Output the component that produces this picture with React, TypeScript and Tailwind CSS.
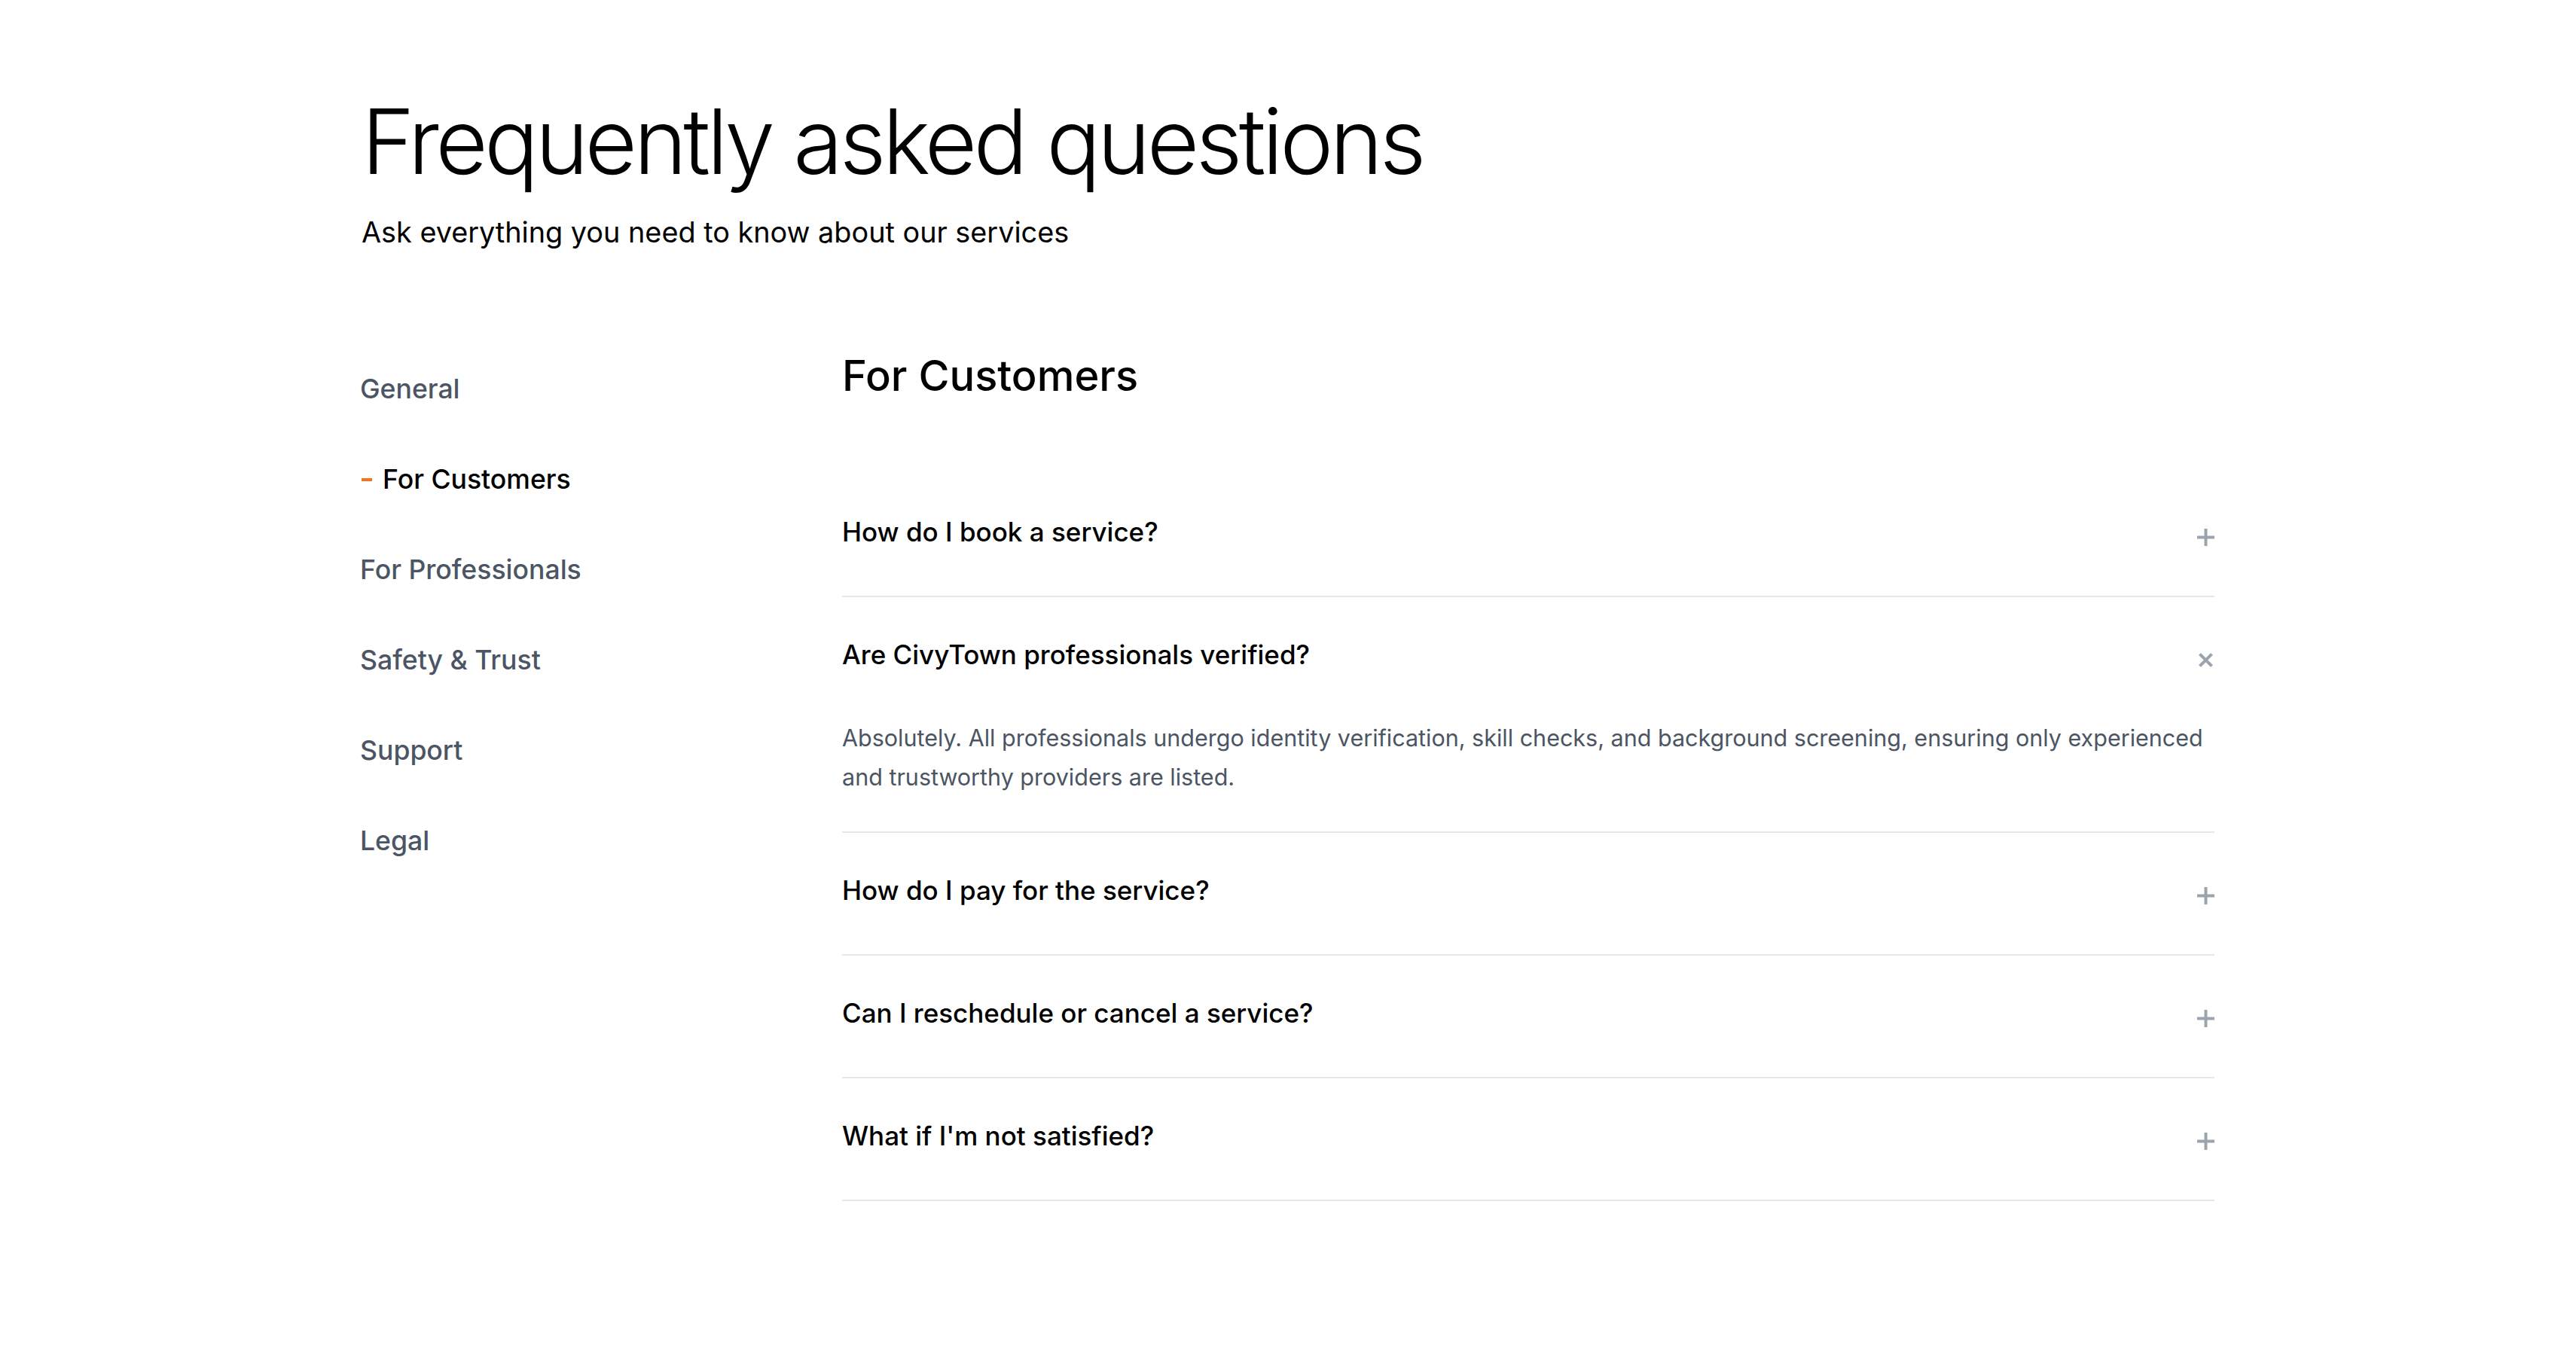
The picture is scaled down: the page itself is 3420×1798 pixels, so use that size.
import React from "react";

const nav = ["General", "For Customers", "For Professionals", "Safety & Trust", "Support", "Legal"];

const faqs = [
  { q: "How do I book a service?", a: "", open: false },
  {
    q: "Are CivyTown professionals verified?",
    a: "Absolutely. All professionals undergo identity verification, skill checks, and background screening, ensuring only experienced and trustworthy providers are listed.",
    open: true,
  },
  { q: "How do I pay for the service?", a: "", open: false },
  { q: "Can I reschedule or cancel a service?", a: "", open: false },
  { q: "What if I'm not satisfied?", a: "", open: false },
];

function PlusIcon({ open }: { open: boolean }) {
  return (
    <svg
      width="23"
      height="23"
      viewBox="0 0 23 23"
      className={open ? "mt-[20px] shrink-0 rotate-45" : "mt-[20px] shrink-0"}
      fill="none"
      stroke="#9ca3af"
      strokeWidth="4"
    >
      <line x1="11.5" y1="0" x2="11.5" y2="23" />
      <line x1="0" y1="11.5" x2="23" y2="11.5" />
    </svg>
  );
}

export default function App() {
  return (
    <div className="min-h-screen bg-white font-['Inter','Noto_Sans',sans-serif] text-black">
      <div className="px-[480px] pt-[128px] pb-[200px]">
        <h1 className="text-[120px] leading-none font-light tracking-[-4.7px]">Frequently asked questions</h1>
        <p className="mt-[33px] text-[37.8px] leading-[54px] font-normal">Ask everything you need to know about our services</p>

        <div className="mt-[131px] flex">
          <nav className="w-[640px] shrink-0 -ml-[2px] pt-[27px] flex flex-col gap-[72px]">
            {nav.map((n) =>
              n === "For Customers" ? (
                <div key={n} className="flex items-center text-[35.6px] leading-[48px] font-medium text-black">
                  <span className="inline-block ml-[2px] w-[14px] h-[4px] bg-[#f97316] mr-[14px]" />
                  {n}
                </div>
              ) : (
                <div key={n} className="text-[35.6px] leading-[48px] font-medium text-[#4b5563]">
                  {n}
                </div>
              )
            )}
          </nav>

          <div className="flex-1">
            <h2 className="text-[56px] leading-[67px] font-medium">For Customers</h2>
            <div className="mt-[97px]">
              {faqs.map((f) => (
                <div key={f.q} className="border-b-2 border-[#e5e7eb]">
                  <div className="flex items-start justify-between pt-[52px] pb-[61px]">
                    <span className="text-[35px] leading-[48px] font-medium">{f.q}</span>
                    <PlusIcon open={f.open} />
                  </div>
                  {f.open && (
                    <p className="pb-[46px] text-[30.5px] leading-[52px] text-[#4b5563] pr-[10px]">{f.a}</p>
                  )}
                </div>
              ))}
            </div>
          </div>
        </div>
      </div>
    </div>
  );
}
